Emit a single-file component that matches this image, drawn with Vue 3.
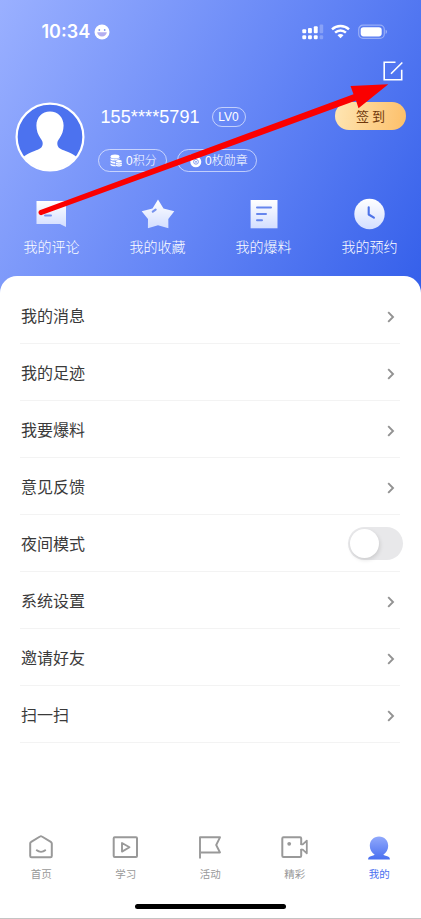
<script setup>
const shortcuts = [
  { label: '我的评论', icon: 'comment' },
  { label: '我的收藏', icon: 'star' },
  { label: '我的爆料', icon: 'note' },
  { label: '我的预约', icon: 'clock' },
]
const rows = [
  { label: '我的消息' },
  { label: '我的足迹' },
  { label: '我要爆料' },
  { label: '意见反馈' },
  { label: '夜间模式', toggle: true },
  { label: '系统设置' },
  { label: '邀请好友' },
  { label: '扫一扫' },
]
const tabs = [
  { label: '首页', icon: 'home' },
  { label: '学习', icon: 'play' },
  { label: '活动', icon: 'flag' },
  { label: '精彩', icon: 'camera' },
  { label: '我的', icon: 'user', active: true },
]
</script>

<template>
  <div class="screen">
    <header class="hero">
      <div class="status">
        <span class="time">10:34</span>
        <svg class="smiley" width="16" height="16" viewBox="0 0 16 16">
          <circle cx="8" cy="8" r="7.5" fill="#fff" />
          <circle cx="5.3" cy="6" r=".9" fill="#8199ef" />
          <circle cx="10.7" cy="6" r=".9" fill="#8199ef" />
          <path d="M3.2 8.2h9.600c-.3 2.600-2.200 4.200-4.800 4.200S3.500 10.800 3.200 8.200z" fill="#b3aef0" />
        </svg>
        <svg class="signal" width="22" height="16" viewBox="0 0 22 16">
          <g fill="#fff">
            <rect x="0.300" y="5.200" width="3.900" height="4" rx="1" />
            <rect x="6" y="4" width="3.900" height="5.200" rx="1" />
            <rect x="11.800" y="2.200" width="3.900" height="7" rx="1" />
            <rect x="0.300" y="11.200" width="3.900" height="4" rx="1.200" />
            <rect x="6" y="11.200" width="3.900" height="4" rx="1.200" />
            <rect x="11.800" y="11.200" width="3.900" height="4" rx="1.200" />
            <g opacity=".25">
              <rect x="17.600" y="0.500" width="3.600" height="8.700" rx="1" />
              <rect x="17.600" y="11.200" width="3.600" height="4" rx="1.200" />
            </g>
          </g>
        </svg>
        <svg class="wifi" width="19" height="15" viewBox="0 0 19 15">
          <g fill="none" stroke="#fff" stroke-width="2.400">
            <path d="M1 5.300C5.700.8 13.300.8 18 5.300" />
            <path d="M4.100 8.700C7.200 5.700 11.800 5.700 14.900 8.700" />
          </g>
          <path d="M6.500 11.200c1.700-1.600 4.300-1.600 6 0l-3 3z" fill="#fff" />
        </svg>
        <svg class="battery" width="30" height="16" viewBox="0 0 30 16">
          <rect x=".7" y="1.200" width="25.600" height="13.200" rx="4.300" fill="none" stroke="#fff" stroke-opacity=".38" stroke-width="1.200" />
          <rect x="2.700" y="3.200" width="21" height="9.200" rx="2.800" fill="#fff" />
          <path d="M27.700 5.700v4.200c1.600-.7 1.600-3.500 0-4.200z" fill="#fff" opacity=".5" />
        </svg>
      </div>

      <div class="tools">
        <svg width="22" height="22" viewBox="0 0 22 22" fill="none" stroke="#fff" stroke-width="1.600">
          <path d="M13.500 2.300H2.200v17.400h17.500V9.800" />
          <path d="M20.300 2.500L9 13.800" />
        </svg>
      </div>

      <section class="profile">
        <svg class="avatar" width="70" height="70" viewBox="0 0 70 70">
          <defs>
            <clipPath id="avatar-clip"><circle cx="35" cy="35" r="33" /></clipPath>
          </defs>
          <circle cx="35" cy="35" r="33.400" fill="#4c72ef" />
          <path clip-path="url(#avatar-clip)" fill="#fff" d="M35 9.500c-8 0-13.600 5.800-13.600 14.100 0 5 1.600 9.300 3.900 12.300 1.500 2 2.400 3.300 2.400 5.700 0 4.500-3.500 5.700-8.200 7.500C12 52 9 54 6 58l4 12h50l4-12c-3-4-6-6-13.500-8.900-4.700-1.800-8.200-3-8.200-7.500 0-2.400.9-3.700 2.400-5.700 2.300-3 3.900-7.300 3.900-12.300 0-8.300-5.600-14.100-13.600-14.100z" />
          <circle cx="35" cy="35" r="33.400" fill="none" stroke="#fff" stroke-width="2.200" />
        </svg>
        <div class="info">
          <div class="identity">
            <span class="phone">155****5791</span>
            <span class="level">LV0</span>
          </div>
          <div class="chips">
            <span class="chip points">
              <svg width="12" height="13" viewBox="0 0 12 13" fill="#fff">
                <ellipse cx="5" cy="2.500" rx="4.500" ry="2.100" />
                <path d="M.5 4c1.500 1.500 7 1.600 9 0v1.300C7.300 5.400 6.300 5.800 5.700 6.600 3.200 6.700 1 6.300.5 5.400zM.5 6.600c1 .9 2.800 1.200 4.800 1.200v1.900C3 9.700.8 9.200.5 8.300zM.5 9.500c1 .9 2.800 1.200 4.800 1.200.1.600.4 1 .9 1.500C3.500 12.300.8 11.900.5 10.900z" />
                <ellipse cx="8.900" cy="7.300" rx="3" ry="1.400" />
                <path d="M5.900 8.500c1.300 1 4.700 1 6 0v1.400c-1.300 1-4.700 1-6 0zM5.900 10.600c1.300 1 4.700 1 6 0v.8c-1.300 1.500-4.700 1.500-6 0z" />
              </svg>
              <span class="chip-text">0积分</span>
            </span>
            <span class="chip medals">
              <svg width="13" height="15" viewBox="0 0 13 15">
                <path d="M1 1.500h10L9.800 6H2.200z" fill="#fff" opacity=".75" />
                <circle cx="6.800" cy="8.800" r="5.500" fill="#fff" />
                <circle cx="7" cy="8.800" r="2.400" fill="none" stroke="#7590ed" stroke-width=".9" />
                <circle cx="7" cy="8.800" r=".9" fill="#7590ed" />
              </svg>
              <span class="chip-text">0枚勋章</span>
            </span>
          </div>
        </div>
        <button class="checkin">签 到</button>
      </section>

      <nav class="shortcuts">
        <div v-for="s in shortcuts" :key="s.label" class="shortcut">
          <svg width="34" height="34" viewBox="0 0 34 34">
            <defs>
              <linearGradient :id="'fill-' + s.icon" x1="0" y1="0" x2="0" y2="1">
                <stop offset="0" stop-color="#fff" />
                <stop offset="1" stop-color="#d3deff" />
              </linearGradient>
            </defs>
            <template v-if="s.icon === 'comment'">
              <path d="M1.500 4h29.500v26l-6-3H1.500z" fill="url(#fill-comment)" />
              <path d="M10 18.500h6" stroke="#7793ee" stroke-width="2" stroke-linecap="round" />
            </template>
            <template v-else-if="s.icon === 'star'">
              <path d="M17 2.500L22.500 11.400 33.300 14.200 27.300 22 27.400 31.300 17 28.200 6.900 31.300 7 22 .7 14.200 11.500 11.400z" fill="url(#fill-star)" />
              <path d="M11.800 14.700l2.800-2" stroke="#7793ee" stroke-width="2.200" stroke-linecap="round" />
            </template>
            <template v-else-if="s.icon === 'note'">
              <path d="M3.600 3h26.900v28.300H3.600z" fill="url(#fill-note)" />
              <path d="M10 10.500h14M10 17h9M10 23.300h5" stroke="#6686ed" stroke-width="2" stroke-linecap="round" />
            </template>
            <template v-else>
              <circle cx="16.500" cy="17" r="15.200" fill="url(#fill-clock)" />
              <path d="M15.700 10.200v7.300l5.200 3.200" fill="none" stroke="#4d73e8" stroke-width="2.100" stroke-linecap="round" stroke-linejoin="round" />
            </template>
          </svg>
          <span>{{ s.label }}</span>
        </div>
      </nav>
    </header>

    <main class="panel">
      <div v-for="r in rows" :key="r.label" class="row">
        <span class="label">{{ r.label }}</span>
        <span v-if="r.toggle" class="toggle"><i class="knob"></i></span>
        <svg v-else class="chevron" width="8" height="12" viewBox="0 0 8 12" fill="none" stroke="#929292" stroke-width="1.900">
          <path d="M1.200 1.200L6 6 1.200 10.800" />
        </svg>
      </div>
    </main>

    <footer class="tabbar">
      <div v-for="t in tabs" :key="t.label" class="tab" :class="{ active: t.active }">
        <svg width="28" height="26" viewBox="0 0 28 26" fill="none" stroke="#999" stroke-width="2" stroke-linejoin="round" stroke-linecap="round">
          <template v-if="t.icon === 'home'">
            <path d="M3.200 9.600c0-.8.300-1.400 1-1.800L13 2.500c.6-.4 1.300-.4 1.900 0l8.900 5.300c.6.400 1 1 1 1.800v12.300c0 .8-.6 1.400-1.400 1.400H4.600c-.8 0-1.400-.6-1.400-1.400z" />
            <path d="M9.800 16.300c2.400 2 6 2 8.400 0" />
          </template>
          <template v-else-if="t.icon === 'play'">
            <rect x="1.700" y="3.300" width="23.300" height="19.600" rx="1" />
            <path d="M10 9v8.600l7.500-4.300z" stroke-width="1.900" />
          </template>
          <template v-else-if="t.icon === 'flag'">
            <path d="M4 24.500V3.300h20L20.200 11l3.800 7.500H5" stroke-linecap="butt" stroke-linejoin="round" stroke-width="1.900" />
          </template>
          <template v-else-if="t.icon === 'camera'">
            <path d="M20.200 10V4.500c0-.8-.4-1.200-1.200-1.200H2.500c-.8 0-1.200.4-1.200 1.200v17.200c0 .8.400 1.200 1.200 1.200H19c.8 0 1.200-.4 1.200-1.200v-6" />
            <path d="M20.200 10.300h1.600l4-3.600v12.600l-4-3.600h-1.600" stroke-width="1.800" stroke-linejoin="round" />
            <circle cx="8.200" cy="9.800" r="1.900" fill="#999" stroke="none" />
          </template>
          <template v-else>
            <defs>
              <linearGradient id="fill-user" x1="0" y1="0" x2="0" y2="1">
                <stop offset="0" stop-color="#91a9fc" />
                <stop offset="1" stop-color="#496ff0" />
              </linearGradient>
            </defs>
            <path d="M14 2.500c-5.400 0-9.200 4-9.200 9.300 0 3.900 2 7 4.900 8.900-.5.900-3.800 1.200-5.600 2.300-.7.500-1 1.200-1 2.500h21.800c0-1.300-.3-2-1-2.500-1.800-1.100-5.100-1.400-5.600-2.300 2.900-1.900 4.900-5 4.900-8.900 0-5.300-3.800-9.300-9.200-9.300z" fill="url(#fill-user)" stroke="none" />
          </template>
        </svg>
        <span>{{ t.label }}</span>
      </div>
    </footer>
    <div class="home-indicator"></div>
    <div class="edge"></div>

    <svg class="pointer" width="421" height="240" viewBox="0 0 421 240">
      <path d="M39.700 210.200L353.500 94.200 350.500 86 388.300 84.300 358.500 108.300 356 100.500 41.600 215.100A2.700 2.700 0 0 1 39.700 210.200z" fill="#fb0000" />
    </svg>
  </div>
</template>

<style>
body {
  margin: 0;
  background: #fff;
}
</style>

<style scoped>
.screen {
  position: relative;
  display: flex;
  flex-direction: column;
  width: 421px;
  height: 919px;
  overflow: hidden;
  background: #fff;
  font-family: 'Liberation Sans', 'Noto Sans CJK SC', sans-serif;
}
.hero {
  box-sizing: border-box;
  height: 296px;
  flex: none;
  color: #fff;
  background: linear-gradient(120deg, #9ab0ff 0%, #6586f6 53%, #345fea 100%);
}
.status {
  display: flex;
  align-items: center;
  height: 40px;
  padding: 23px 33px 0 41.500px;
  box-sizing: border-box;
}
.time {
  width: 49px;
  font: 600 18px/18px Inter, sans-serif;
  white-space: nowrap;
}
.smiley {
  margin-left: 3px;
}
.signal {
  margin-left: auto;
}
.wifi {
  margin-left: 7px;
}
.battery {
  margin-left: 8px;
}
.tools {
  display: flex;
  justify-content: flex-end;
  padding: 20px 17px 0 0;
  height: 62px;
  box-sizing: border-box;
}
.profile {
  display: flex;
  align-items: flex-start;
  height: 94px;
  padding: 0 15px 0 14.500px;
}
.avatar {
  flex: none;
}
.info {
  padding: 4px 0 0 13.500px;
}
.identity {
  display: flex;
  align-items: center;
  height: 21px;
}
.phone {
  width: 98px;
  margin-left: 2.500px;
  padding-top: 1px;
  font-size: 18px;
  letter-spacing: 0.100px;
  line-height: 21px;
}
.level {
  box-sizing: border-box;
  width: 34px;
  height: 20px;
  margin-left: 13px;
  border: 1px solid rgba(255, 255, 255, 0.600);
  border-radius: 10px;
  font-size: 12px;
  line-height: 18px;
  text-align: center;
}
.chips {
  display: flex;
  gap: 10px;
  margin-top: 21.500px;
}
.chip {
  display: flex;
  align-items: center;
  gap: 4px;
  box-sizing: border-box;
  height: 23px;
  border: 1px solid rgba(255, 255, 255, 0.600);
  border-radius: 12px;
  font-family: 'Liberation Sans', 'Noto Sans CJK SC', sans-serif;
  font-size: 12px;
  font-weight: 300;
  line-height: 20px;
  white-space: nowrap;
}
.chip-text {
  padding-top: 2px;
}
.points {
  width: 69px;
  padding-left: 11px;
}
.medals {
  width: 80px;
  padding-left: 11px;
  gap: 3px;
}
.checkin {
  width: 71px;
  height: 28px;
  margin-left: auto;
  padding: 0;
  border: 0;
  border-radius: 14px;
  background: linear-gradient(100deg, #fee6b4, #fdbf69);
  color: #70380b;
  font-family: 'Noto Sans CJK SC', sans-serif;
  font-size: 13px;
  line-height: 28px;
}
.shortcuts {
  display: grid;
  grid-template-columns: repeat(4, 106px);
  margin-left: -1.500px;
}
.shortcut {
  display: flex;
  flex-direction: column;
  align-items: center;
  font-size: 14px;
  font-family: 'Noto Sans CJK SC', sans-serif;
  line-height: 20px;
  font-weight: 300;
  padding-top: 1px;
}
.shortcut span {
  margin-top: 5px;
}
.panel {
  position: relative;
  height: 537px;
  flex: none;
  box-sizing: border-box;
  margin-top: -20.500px;
  padding: 11px 21px 0 20px;
  border-radius: 17px 17px 0 0;
  background: #fff;
}
.row {
  display: flex;
  align-items: center;
  justify-content: space-between;
  box-sizing: border-box;
  height: 57px;
  padding: 1px 5px 0 1px;
  border-bottom: 1.500px solid #f3f3f3;
  color: #3a3a3a;
  font-family: 'Noto Sans CJK SC', sans-serif;
  font-size: 16px;
}
.label {
  margin-top: -1px;
}
.chevron {
  margin-top: 3px;
}
.toggle {
  box-sizing: border-box;
  width: 55px;
  height: 33px;
  margin-top: 1px;
  margin-right: -8px;
  padding: 2px;
  border-radius: 17px;
  background: #e8e8ea;
}
.knob {
  display: block;
  width: 29px;
  height: 29px;
  border-radius: 50%;
  background: #fff;
  box-shadow: 1px 2px 4px rgba(0, 0, 0, 0.120);
}
.tabbar {
  display: grid;
  grid-template-columns: repeat(5, 84.500px);
  flex: none;
  height: 91px;
  margin-left: -1px;
  padding-top: 21px;
  box-sizing: border-box;
}
.tab {
  display: flex;
  flex-direction: column;
  align-items: center;
  color: #999;
  font-family: 'Noto Sans CJK SC', sans-serif;
  font-size: 10.500px;
  line-height: 16px;
}
.tab span {
  margin-top: 6px;
}
.active {
  color: #4970f0;
}
.home-indicator {
  flex: none;
  width: 151px;
  height: 5px;
  margin-left: 135px;
  border-radius: 3px;
  background: #000;
}
.edge {
  height: 1.500px;
  margin-top: 9px;
  background: #c4c4c4;
}
.pointer {
  position: absolute;
  left: 0;
  top: 0;
}
</style>
